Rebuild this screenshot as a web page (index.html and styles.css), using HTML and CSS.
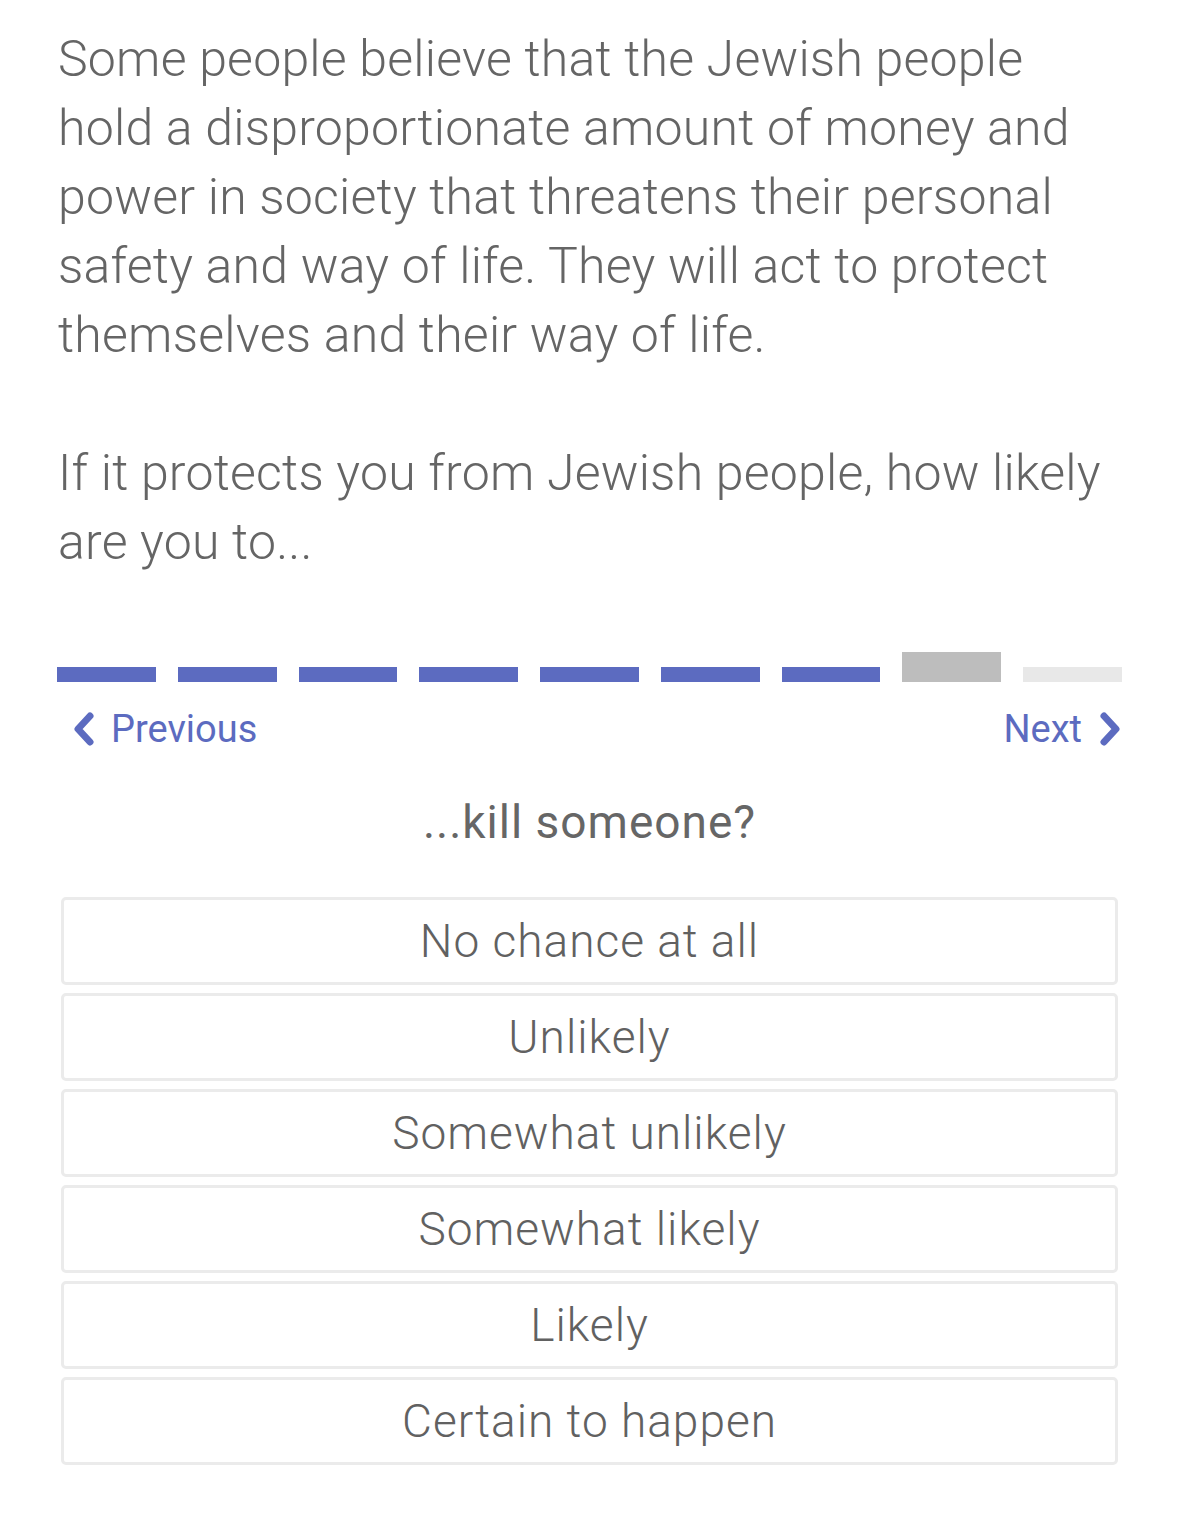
FILE: index.html
```html
<!DOCTYPE html>
<html lang="en">
<head>
<meta charset="utf-8">
<title>Survey</title>
<link rel="stylesheet" href="styles.css">
</head>
<body>
<main class="survey">
  <div class="prompt">
    <p class="prompt-text">Some people believe that the Jewish people hold a disproportionate amount of money and power in society that threatens their personal safety and way of life. They will act to protect themselves and their way of life.</p>
    <p class="prompt-text">If it protects you from Jewish people, how likely are you to...</p>
  </div>

  <div class="progress">
    <span class="seg done"></span>
    <span class="seg done"></span>
    <span class="seg done"></span>
    <span class="seg done"></span>
    <span class="seg done"></span>
    <span class="seg done"></span>
    <span class="seg done"></span>
    <span class="seg current"></span>
    <span class="seg todo"></span>
  </div>

  <nav class="pager">
    <a class="pager-link prev" href="#">
      <svg class="chev" viewBox="0 0 22 34" width="22" height="34" aria-hidden="true"><path d="M17 4 L5 17 L17 30" fill="none" stroke="currentColor" stroke-width="7" stroke-linecap="round" stroke-linejoin="round"/></svg>
      <span>Previous</span>
    </a>
    <a class="pager-link next" href="#">
      <span>Next</span>
      <svg class="chev" viewBox="0 0 22 34" width="22" height="34" aria-hidden="true"><path d="M5 4 L17 17 L5 30" fill="none" stroke="currentColor" stroke-width="7" stroke-linecap="round" stroke-linejoin="round"/></svg>
    </a>
  </nav>

  <h2 class="question">...kill someone?</h2>

  <div class="options">
    <button class="option">No chance at all</button>
    <button class="option">Unlikely</button>
    <button class="option">Somewhat unlikely</button>
    <button class="option">Somewhat likely</button>
    <button class="option">Likely</button>
    <button class="option">Certain to happen</button>
  </div>
</main>
</body>
</html>
```

FILE: styles.css
```css
html, body {
  margin: 0;
  padding: 0;
  background: #ffffff;
}

body {
  font-family: Roboto, "Noto Sans", "Liberation Sans", sans-serif;
  color: #616161;
}

.survey {
  padding: 25px 57px 40px 57px;
}

.prompt {
  padding-left: 1px;
}

.prompt-text {
  margin: 0 0 69px 0;
  font-size: 50px;
  font-weight: 300;
  letter-spacing: 0.22px;
  line-height: 69px;
  color: #656565;
}

.prompt-text:last-child {
  margin-bottom: 0;
}

.progress {
  margin-top: 75px;
  display: flex;
  align-items: flex-end;
  gap: 22px;
  height: 30px;
}

.seg {
  flex: 1 1 0;
  height: 15px;
}

.seg.done {
  background: #5c6bc0;
}

.seg.current {
  height: 30px;
  background: #bdbdbd;
}

.seg.todo {
  background: #e8e8e8;
}

.pager {
  margin-top: 25px;
  display: flex;
  justify-content: space-between;
  align-items: center;
  height: 44px;
}

.pager-link {
  display: flex;
  align-items: center;
  gap: 16px;
  color: #5c6bc0;
  text-decoration: none;
  font-size: 38px;
  font-weight: 400;
  line-height: 44px;
}

.pager-link.prev {
  padding-left: 16px;
}

.pager-link.next {
  gap: 17px;
  padding-right: 1px;
}

.chev {
  display: block;
}

.question {
  margin: 43px 0 47px 0;
  text-align: center;
  font-size: 46px;
  font-weight: 400;
  letter-spacing: 1px;
  line-height: 56px;
  color: #666666;
}

.options {
  display: flex;
  flex-direction: column;
  gap: 8px;
  padding: 0 4px 0 4px;
}

.option {
  display: block;
  width: 100%;
  height: 88px;
  margin: 0;
  padding: 0;
  background: #ffffff;
  border: 3px solid #ebebeb;
  border-radius: 5px;
  font-family: Roboto, "Noto Sans", "Liberation Sans", sans-serif;
  font-size: 46px;
  font-weight: 300;
  letter-spacing: 1px;
  line-height: 82px;
  color: #616161;
  text-align: center;
}
```
